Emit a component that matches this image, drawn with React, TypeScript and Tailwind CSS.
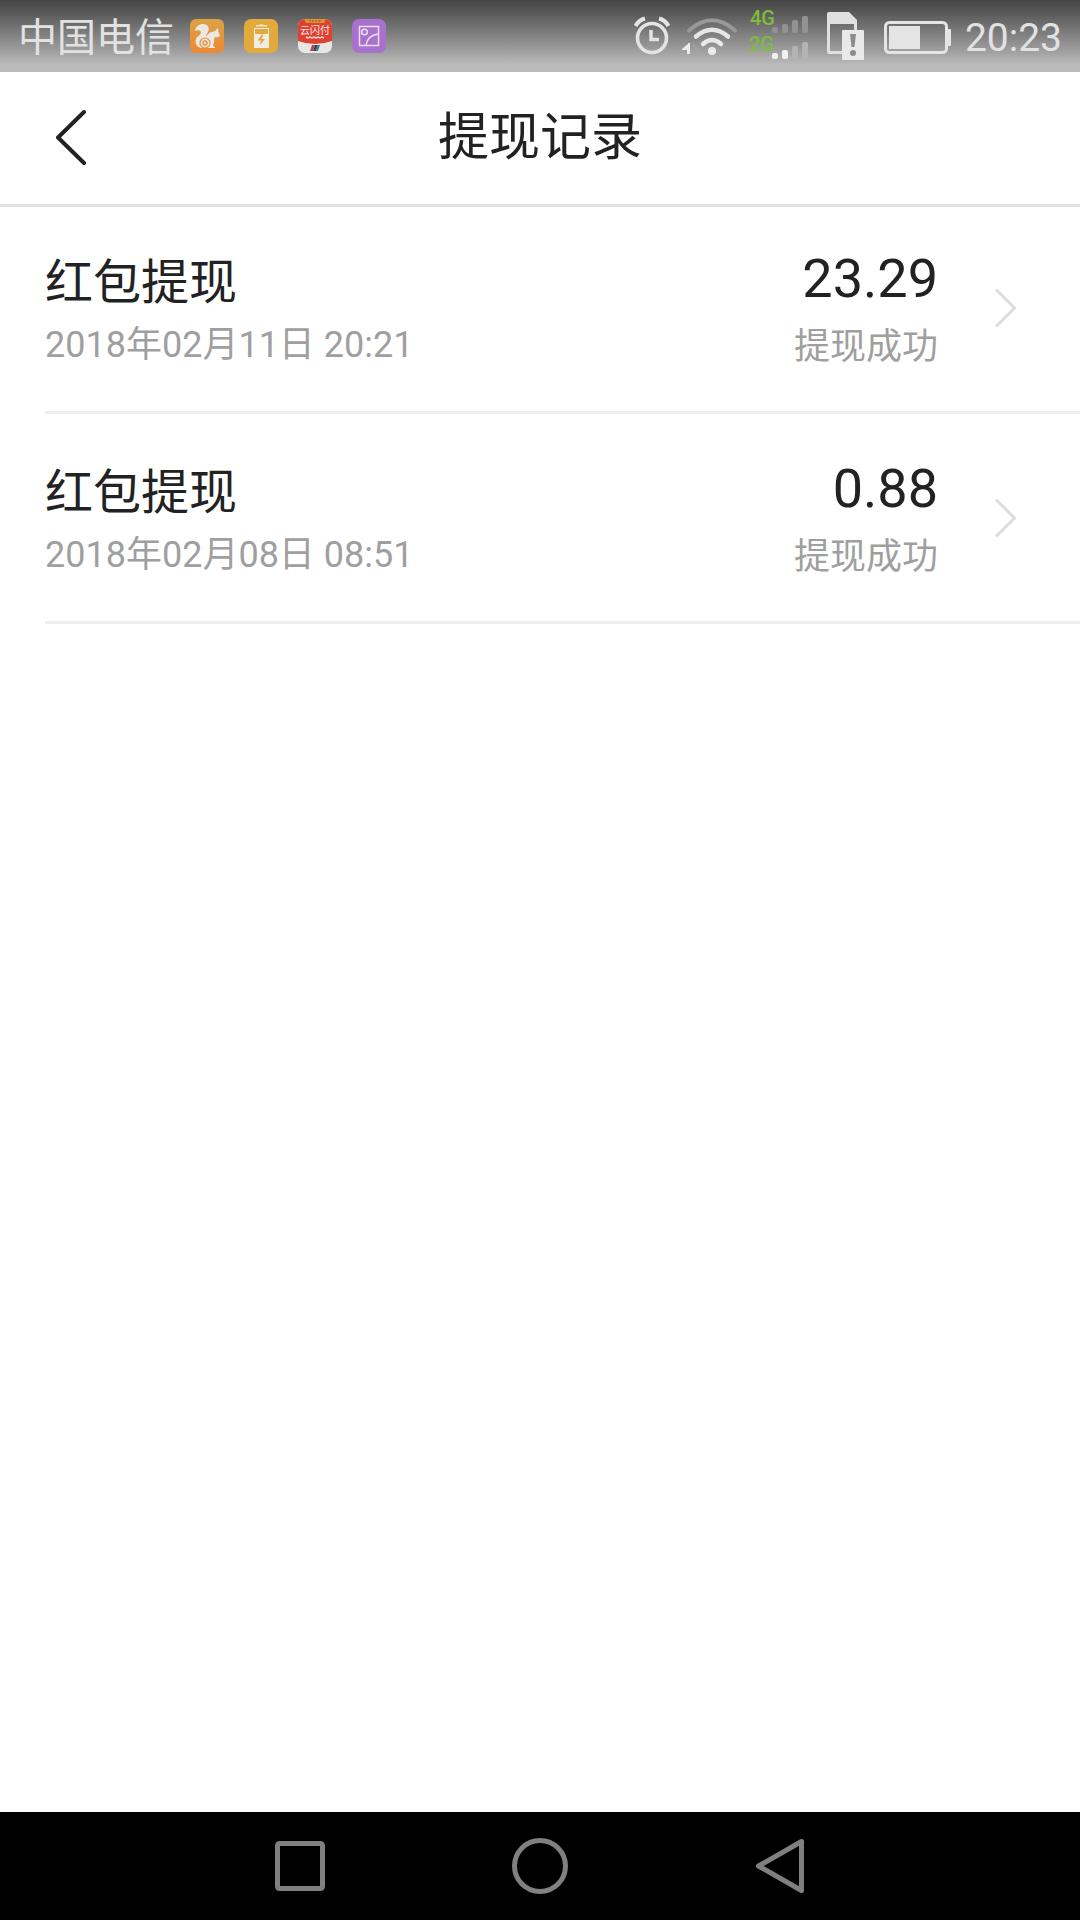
import React from "react";

type RecordItem = { title: string; time: string; amount: string; status: string };

const records: RecordItem[] = [
  { title: "红包提现", time: "2018年02月11日 20:21", amount: "23.29", status: "提现成功" },
  { title: "红包提现", time: "2018年02月08日 08:51", amount: "0.88", status: "提现成功" },
];

function SquirrelIcon() {
  return (
    <svg width="34" height="34" viewBox="0 0 34 34" aria-hidden="true">
      <defs>
        <linearGradient id="squirrel" x1="0" y1="0" x2="0" y2="1">
          <stop offset="0" stopColor="#dba344" />
          <stop offset="1" stopColor="#ee8733" />
        </linearGradient>
      </defs>
      <rect width="34" height="34" rx="6" fill="url(#squirrel)" />
      <path
        d="M5 12C6 7 9 5 13 5c5 0 7 4 5 8-1 2-2 3-2 4 5-2 9 1 8 6l-1 4 2 1v1H11c-5-1-7-7-4-11 3-2 4-3 4-5-1-2-3-2-6-1z"
        fill="#ebe8e2"
      />
      <path d="M28 9q0 4 2 8-3 2-5 1-1 2-2 5-2-3-4-4l-2-2q2-4 5-4 4-1 6-4z" fill="#ebe8e2" />
      <circle cx="15" cy="24" r="5" fill="none" stroke="#e8923c" strokeWidth="1.200" />
      <circle cx="15" cy="24" r="2" fill="none" stroke="#e8923c" strokeWidth="1.500" />
    </svg>
  );
}

function PowerAppIcon() {
  return (
    <svg width="34" height="34" viewBox="0 0 34 34" aria-hidden="true">
      <rect width="34" height="34" rx="7" fill="#e3aa3b" />
      <path d="M12 7q5-2.500 11 0z" fill="#f2e6cb" stroke="#f2e6cb" />
      <rect x="10" y="9" width="15" height="20" fill="#f1ede5" />
      <rect x="11" y="10" width="13" height="5" fill="#e3aa3b" />
      <path d="M18 15.500l-4.500 6h3.500l-1.500 5 5.500-6.500h-3.500l2-4.500z" fill="#e3aa3b" />
    </svg>
  );
}

function UnionPayIcon() {
  return (
    <svg width="34" height="34" viewBox="0 0 34 34" role="img" aria-label="云闪付">
      <clipPath id="payClip">
        <rect width="34" height="34" rx="7" />
      </clipPath>
      <g clipPath="url(#payClip)">
        <rect width="34" height="34" fill="#e9e7e4" />
        <path d="M0 0h34v22q-17 6-34 0z" fill="#df4032" />
        <path d="M6 0h22l-2 4H8z" fill="#dd9232" />
        <path d="M11 2h2m1 0h2m1 0h2m1 0h3" stroke="#94612c" />
        <text x="17" y="15" textAnchor="middle" fontSize="10" fill="#f4e8e4" className="font-['Noto_Sans_CJK_SC',sans-serif]">
          云闪付
        </text>
        <path d="M8 18l2 1 2-1 2 1 2-1 2 1 2-1 2 1 2-1 2 1" stroke="#f0d5ce" strokeWidth="1.500" fill="none" />
        <path d="M14 26h3l-2 6h-3z" fill="#c33c55" />
        <path d="M17 26h3l-2 6h-3z" fill="#354868" />
        <path d="M20 26h2l-2 6h-2z" fill="#378276" />
      </g>
    </svg>
  );
}

function GalleryIcon() {
  return (
    <svg width="34" height="34" viewBox="0 0 34 34" aria-hidden="true" fill="none" stroke="#eadff0" strokeWidth="1.500">
      <rect width="34" height="34" rx="7" fill="#a871cd" stroke="none" />
      <rect x="7.500" y="7.500" width="19" height="19" />
      <circle cx="12.500" cy="13" r="2.800" />
      <path d="M14 26c1-6 5-10 12-11" />
    </svg>
  );
}

function AlarmIcon() {
  return (
    <svg width="36" height="72" viewBox="0 0 36 72" aria-hidden="true" fill="none" stroke="#e4e4e4">
      <circle cx="18" cy="38" r="14.500" strokeWidth="3.600" />
      <path d="M17 30v9.500h8" strokeWidth="3.500" />
      <path d="M1.500 26Q5 20 11 18.500M34.500 26Q31 20 25 18.500" strokeWidth="4" />
    </svg>
  );
}

function WifiIcon() {
  return (
    <svg width="56" height="72" viewBox="0 0 56 72" aria-hidden="true" fill="none" strokeLinecap="round">
      <path d="M7 30.500Q30 10 53 30.500" stroke="#999999" strokeWidth="4" />
      <path d="M14 36.500Q30 23 46 36.500" stroke="#e6e6e6" strokeWidth="4.500" />
      <path d="M21 44Q30 36 39 44" stroke="#e8e8e8" strokeWidth="4.500" />
      <circle cx="30" cy="51" r="4" fill="#ebebeb" />
      <path d="M0 49l6-5v-1h2v11H5v-4H0z" fill="#ebebeb" />
      <path d="M11 43l6 6-6 5z" fill="#a0a0a0" />
    </svg>
  );
}

function SignalIcon() {
  return (
    <svg width="60" height="72" viewBox="0 0 60 72" role="img" aria-label="4G 2G">
      <g fill="#929292">
        <rect x="24" y="27" width="6" height="6" rx="2" />
        <rect x="34" y="24" width="6" height="9" rx="2" />
        <rect x="44" y="20" width="6" height="13" rx="2" />
        <rect x="54" y="16" width="6" height="17" rx="2" />
      </g>
      <g fill="#f2f2f2">
        <rect x="24" y="53" width="6" height="6" rx="2" />
        <rect x="34" y="50" width="6" height="9" rx="2" />
      </g>
      <g fill="#b4b4b4">
        <rect x="44" y="46" width="6" height="13" rx="2" />
        <rect x="54" y="42" width="6" height="17" rx="2" />
      </g>
      <g fill="#7cbd3c" fontSize="20" className="font-[Roboto,sans-serif] font-medium">
        <text x="2" y="25">4G</text>
        <text x="1" y="51">2G</text>
      </g>
    </svg>
  );
}

function SimIcon() {
  return (
    <svg width="38" height="72" viewBox="0 0 38 72" aria-hidden="true">
      <path
        fillRule="evenodd"
        fill="#e0e0e0"
        d="M2 12h20l8 8v34H2q-2 0-2-2V14q0-2 2-2zM3 24v27h24V24z"
      />
      <rect x="15" y="30" width="22" height="30" rx="1" fill="#e9e9e9" />
      <path d="M23 34h6l-1.500 13h-3z" fill="#8c8c8c" />
      <circle cx="26" cy="53" r="3" fill="#8c8c8c" />
    </svg>
  );
}

function BatteryIcon() {
  return (
    <svg width="68" height="72" viewBox="0 0 68 72" aria-hidden="true">
      <rect x="1.500" y="22.500" width="61" height="30" rx="4" fill="none" stroke="#e4e4e4" strokeWidth="3" />
      <path d="M63 29h3q1 0 1 1v15q0 1-1 1h-3z" fill="#e4e4e4" />
      <rect x="5" y="26" width="31" height="23" fill="#e4e4e4" />
    </svg>
  );
}

function StatusBar() {
  return (
    <div className="flex h-[72px] items-center justify-between bg-linear-to-b from-[#444444] to-[#bababa] to-90% px-[18px] text-[#e2e2e2]">
      <div className="flex items-center gap-5">
        <span className="-mr-1 pt-1 text-[39px] leading-[72px]">中国电信</span>
        <SquirrelIcon />
        <PowerAppIcon />
        <UnionPayIcon />
        <GalleryIcon />
      </div>
      <div className="flex items-center">
        <div className="mr-[13px] flex items-center gap-3">
          <AlarmIcon />
          <div className="flex items-center gap-[10px]">
            <WifiIcon />
            <SignalIcon />
          </div>
          <div className="ml-[7px] flex items-center gap-[19px]">
            <SimIcon />
            <BatteryIcon />
          </div>
        </div>
        <time className="pt-1 text-[39px] leading-[72px]">20:23</time>
      </div>
    </div>
  );
}

function Header() {
  return (
    <header className="relative flex h-[132px] items-center justify-center shadow-[0_3px_0_#e2e2e2]">
      <button type="button" aria-label="返回" className="absolute left-[36px] flex size-[72px] items-center justify-center">
        <svg width="32" height="60" viewBox="0 0 32 60" fill="none" stroke="#222222" strokeWidth="4" strokeLinecap="round" strokeLinejoin="round">
          <path d="M28 4L2 29.500L28 55" />
        </svg>
      </button>
      <h1 className="text-[51px] leading-[72px]">提现记录</h1>
    </header>
  );
}

function RecordRow({ item }: { item: RecordItem }) {
  return (
    <li className="ml-[45px] border-b-[3px] border-[#eeeeee]">
      <button type="button" className="flex h-[207px] w-full items-center pr-[63px] text-left">
        <span className="flex flex-1 flex-col pt-2">
          <span className="text-[48px] leading-[66px]">{item.title}</span>
          <span className="text-[36px] leading-[58px] text-[#9f9f9f]">{item.time}</span>
        </span>
        <span className="mr-[56px] flex flex-col pt-3 text-right">
          <span className="text-[54px] leading-[66px]">{item.amount}</span>
          <span className="text-[36px] leading-[70px] text-[#9f9f9f]">{item.status}</span>
        </span>
        <svg width="23" height="40" viewBox="0 0 23 40" fill="none" stroke="#dddddd" strokeWidth="3" aria-hidden="true">
          <path d="M2 1.500L20.500 20L2 38.500" />
        </svg>
      </button>
    </li>
  );
}

function NavBar() {
  return (
    <nav className="flex h-[108px] items-center justify-center gap-[180px] bg-black">
      <button type="button" aria-label="最近任务" className="flex size-[60px] items-center justify-center">
        <svg width="50" height="50" viewBox="0 0 50 50" fill="none" stroke="#808080" strokeWidth="5">
          <rect x="2.500" y="2.500" width="45" height="45" rx="2" />
        </svg>
      </button>
      <button type="button" aria-label="主页" className="flex size-[60px] items-center justify-center">
        <svg width="56" height="56" viewBox="0 0 56 56" fill="none" stroke="#808080" strokeWidth="5">
          <circle cx="28" cy="28" r="25.500" />
        </svg>
      </button>
      <button type="button" aria-label="返回上一页" className="flex size-[60px] items-center justify-center">
        <svg width="48" height="54" viewBox="0 0 48 54" fill="none" stroke="#808080" strokeWidth="5" strokeLinejoin="round">
          <path d="M45.500 2.500v49L2.500 27z" />
        </svg>
      </button>
    </nav>
  );
}

export default function App() {
  return (
    <div className="flex min-h-screen flex-col bg-white font-[Roboto,'Noto_Sans_CJK_SC',sans-serif] text-[#222222]" lang="zh-CN">
      <StatusBar />
      <Header />
      <main className="flex-1">
        <ul>
          {records.map((item) => (
            <RecordRow key={item.time} item={item} />
          ))}
        </ul>
      </main>
      <NavBar />
    </div>
  );
}
